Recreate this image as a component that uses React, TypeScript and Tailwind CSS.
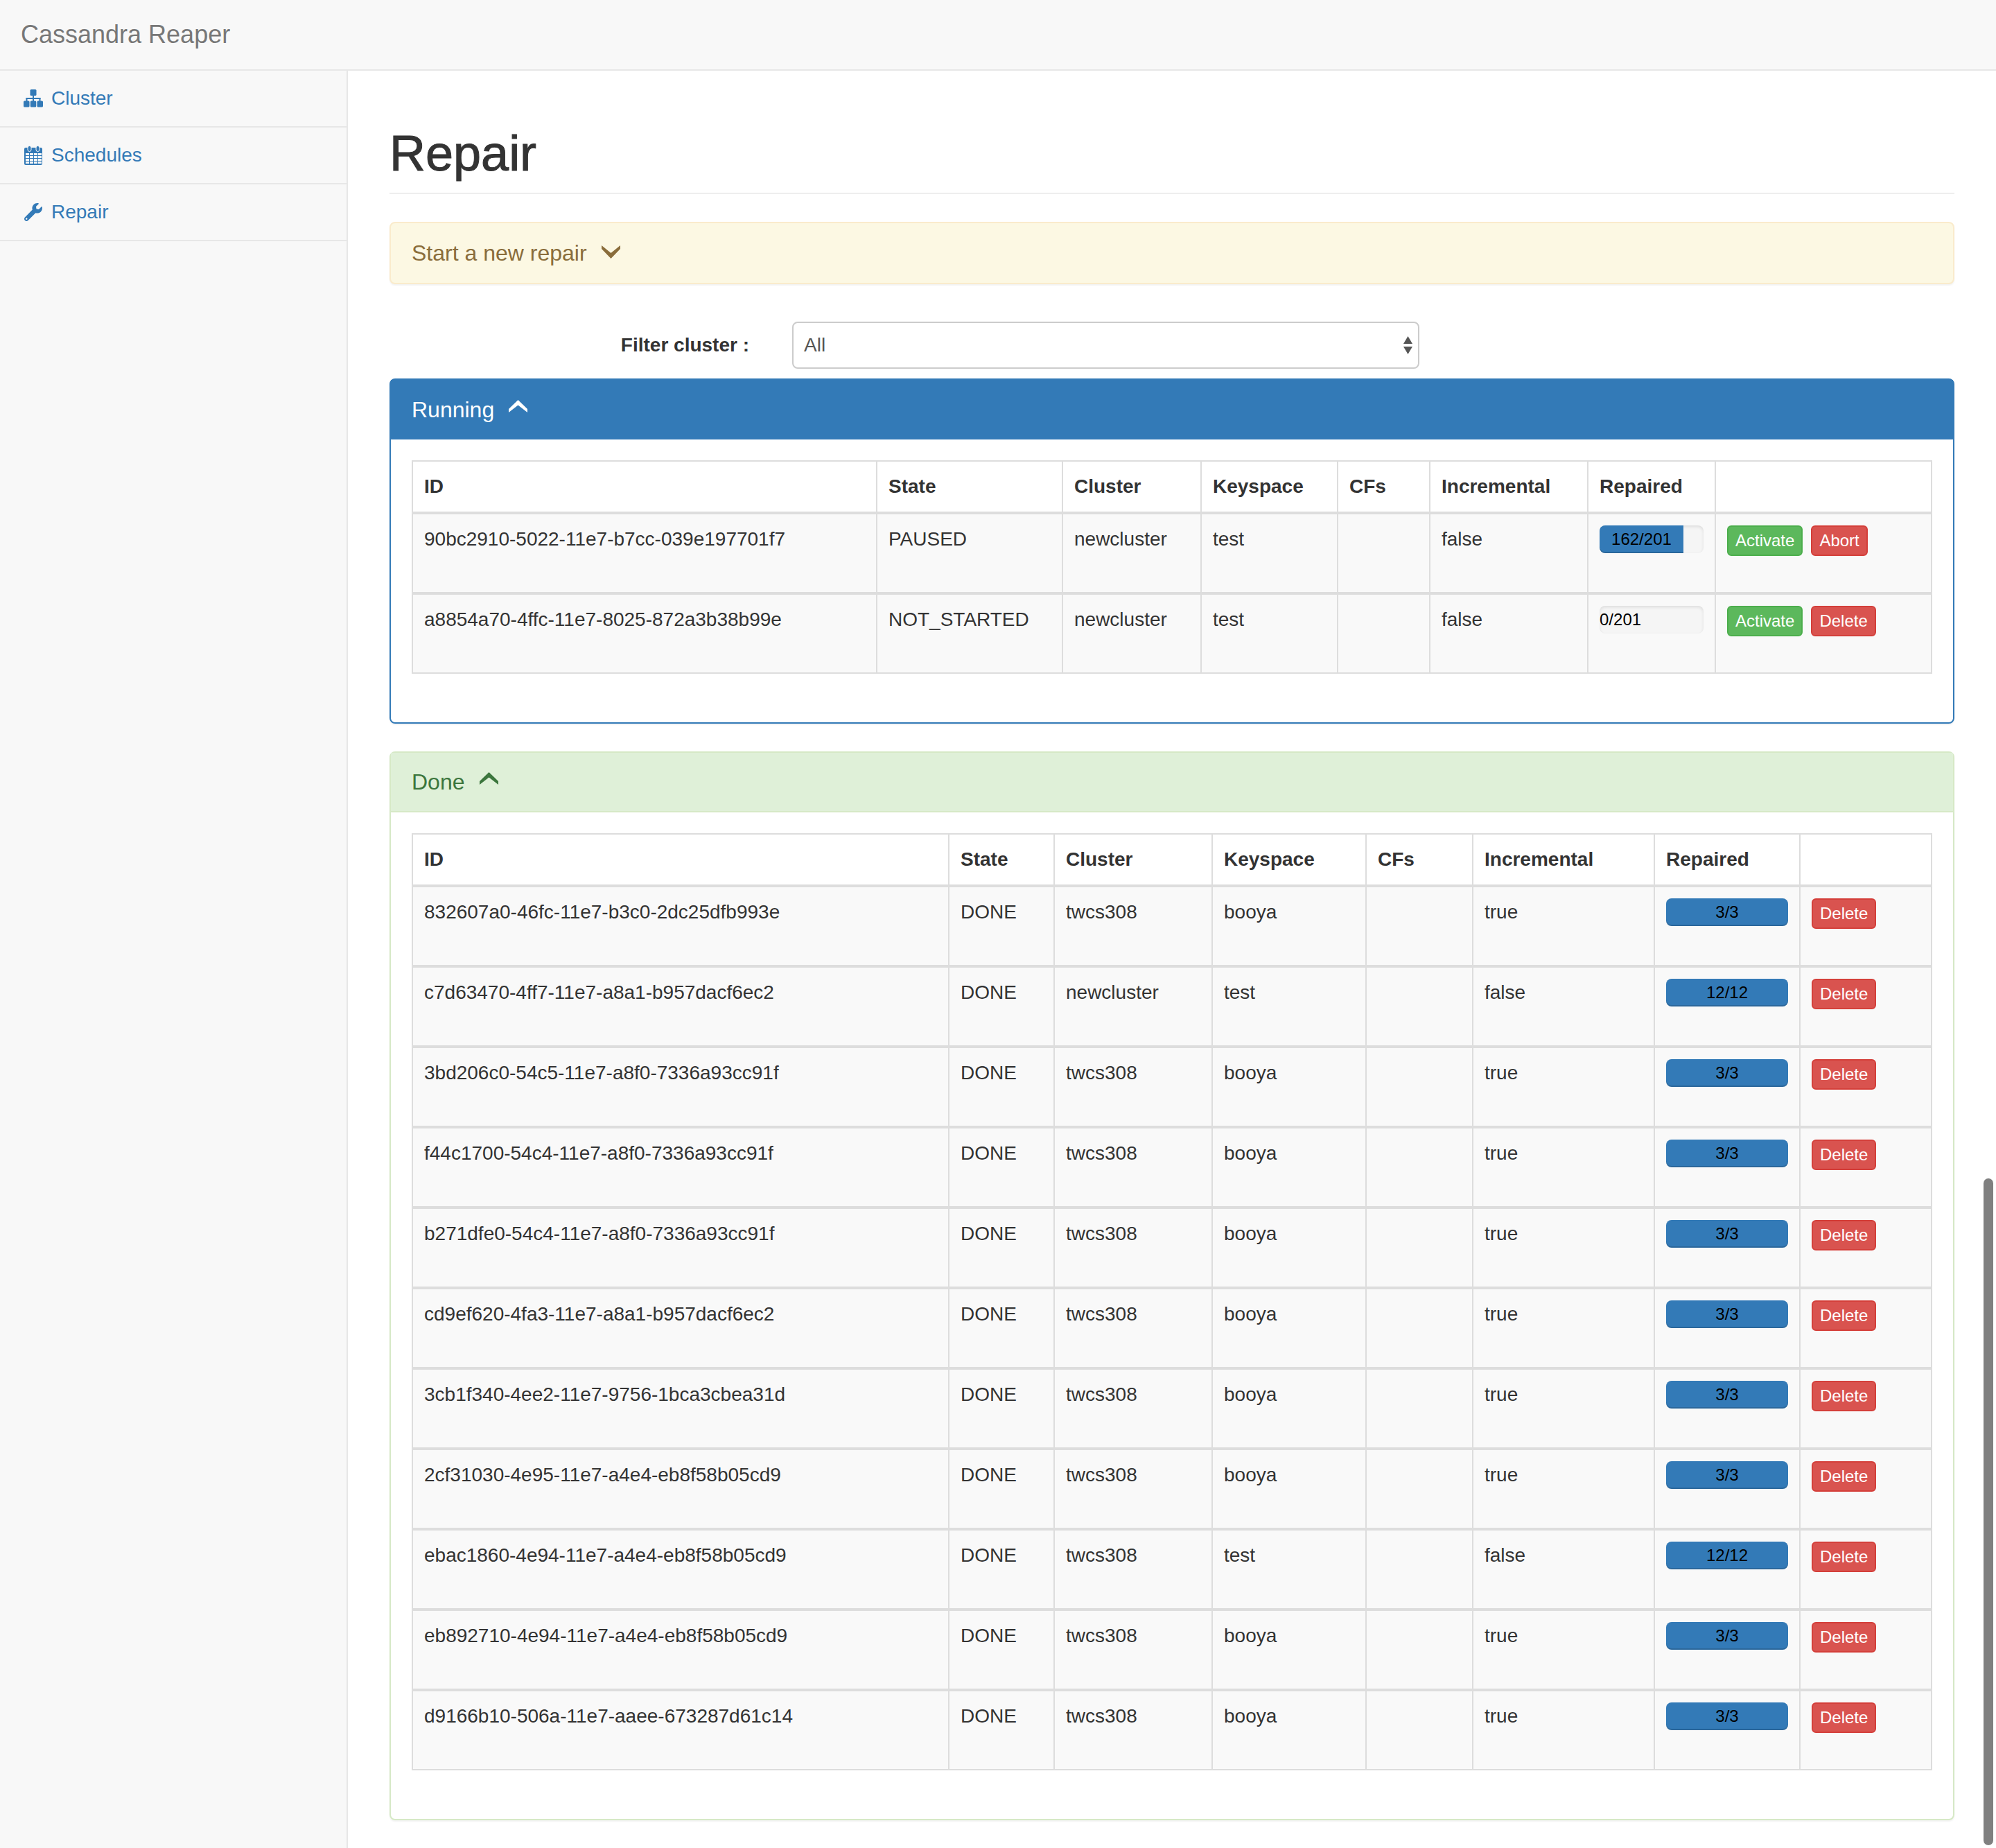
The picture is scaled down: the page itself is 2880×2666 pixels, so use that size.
import { FaWrench } from "react-icons/fa";

type RepairRow = {
  id: string;
  state: string;
  cluster: string;
  keyspace: string;
  incremental: string;
  done: number;
  total: number;
  actions: string[];
};

const running: RepairRow[] = [
  { id: "90bc2910-5022-11e7-b7cc-039e197701f7", state: "PAUSED", cluster: "newcluster", keyspace: "test", incremental: "false", done: 162, total: 201, actions: ["Activate", "Abort"] },
  { id: "a8854a70-4ffc-11e7-8025-872a3b38b99e", state: "NOT_STARTED", cluster: "newcluster", keyspace: "test", incremental: "false", done: 0, total: 201, actions: ["Activate", "Delete"] },
];

const doneRow = (id: string, cluster = "twcs308", keyspace = "booya", incremental = "true", total = 3): RepairRow => ({
  id,
  state: "DONE",
  cluster,
  keyspace,
  incremental,
  done: total,
  total,
  actions: ["Delete"],
});

const done: RepairRow[] = [
  doneRow("832607a0-46fc-11e7-b3c0-2dc25dfb993e"),
  doneRow("c7d63470-4ff7-11e7-a8a1-b957dacf6ec2", "newcluster", "test", "false", 12),
  doneRow("3bd206c0-54c5-11e7-a8f0-7336a93cc91f"),
  doneRow("f44c1700-54c4-11e7-a8f0-7336a93cc91f"),
  doneRow("b271dfe0-54c4-11e7-a8f0-7336a93cc91f"),
  doneRow("cd9ef620-4fa3-11e7-a8a1-b957dacf6ec2"),
  doneRow("3cb1f340-4ee2-11e7-9756-1bca3cbea31d"),
  doneRow("2cf31030-4e95-11e7-a4e4-eb8f58b05cd9"),
  doneRow("ebac1860-4e94-11e7-a4e4-eb8f58b05cd9", "twcs308", "test", "false", 12),
  doneRow("eb892710-4e94-11e7-a4e4-eb8f58b05cd9"),
  doneRow("d9166b10-506a-11e7-aaee-673287d61c14"),
];

const runningCols = ["w-[670px]", "w-[268px]", "w-[200px]", "w-[197px]", "w-[133px]", "w-[228px]", "w-[184px]", "w-[312px]"];
const doneCols = ["w-[774px]", "w-[152px]", "w-[228px]", "w-[222px]", "w-[154px]", "w-[262px]", "w-[210px]", "w-[190px]"];
const headers = ["ID", "State", "Cluster", "Keyspace", "CFs", "Incremental", "Repaired", ""];

function SitemapIcon() {
  return (
    <svg width="28" height="26" viewBox="0 0 28 26" fill="#337ab7">
      <rect x="9.5" y="0" width="9" height="9" rx="1.5" />
      <rect x="0" y="16.5" width="8.5" height="9" rx="1.5" />
      <rect x="9.75" y="16.5" width="8.5" height="9" rx="1.5" />
      <rect x="19.5" y="16.5" width="8.5" height="9" rx="1.5" />
      <rect x="13" y="9" width="2" height="8" />
      <rect x="3.5" y="12" width="21" height="2" />
      <rect x="3.5" y="12" width="2" height="5" />
      <rect x="22.5" y="12" width="2" height="5" />
    </svg>
  );
}

function CalendarIcon() {
  return (
    <svg width="28" height="28" viewBox="0 0 28 28">
      <rect x="1" y="3" width="26" height="25" rx="2" fill="#337ab7" />
      <rect x="6" y="0.5" width="5" height="8" rx="2.5" fill="#337ab7" stroke="#f8f8f8" strokeWidth="1" />
      <rect x="18" y="0.5" width="5" height="8" rx="2.5" fill="#337ab7" stroke="#f8f8f8" strokeWidth="1" />
      <g fill="#f8f8f8">
        {[3, 9, 15, 21].map((x) =>
          [11, 15, 19, 23].map((y) => <rect key={`${x}-${y}`} x={x} y={y} width="5" height="3" />),
        )}
      </g>
    </svg>
  );
}

function ChevronUp() {
  return (
    <svg width="27" height="18" viewBox="0 0 27 18" fill="currentColor" className="ml-[21px] mb-[10px]">
      <polygon points="13.5,0 27,13 27,18 13.5,7.5 0,18 0,13" />
    </svg>
  );
}

function ChevronDown() {
  return (
    <svg width="27" height="19" viewBox="0 0 27 19" fill="currentColor" className="ml-[21px] mb-[3px]">
      <polygon points="13.5,19 27,5 27,0 13.5,11 0,0 0,5" />
    </svg>
  );
}

function Progress({ done, total }: { done: number; total: number }) {
  return (
    <div className="h-10 mb-10 rounded-lg bg-[#f5f5f5] shadow-[inset_0_2px_4px_rgba(0,0,0,0.1)] text-[24px] leading-10 text-black">
      <div
        className="h-10 rounded-l-lg last:rounded-lg bg-[#337ab7] shadow-[inset_0_-2px_0_rgba(0,0,0,0.15)] text-center whitespace-nowrap"
        style={{ width: `${(done / total) * 100}%`, borderRadius: done === total ? 8 : "8px 0 0 8px" }}
      >
        {done}/{total}
      </div>
    </div>
  );
}

function ActionButton({ label }: { label: string }) {
  const green = label === "Activate";
  return (
    <button
      className={
        "h-11 px-[10px] rounded-md border-2 text-white text-[24px] leading-9 " +
        (green ? "bg-[#5cb85c] border-[#4cae4c]" : "bg-[#d9534f] border-[#d43f3a]")
      }
    >
      {label}
    </button>
  );
}

function RepairTable({ rows, cols }: { rows: RepairRow[]; cols: string[] }) {
  return (
    <table className="w-[2194px] table-fixed border-collapse">
      <colgroup>
        {cols.map((c) => (
          <col key={c} className={c} />
        ))}
      </colgroup>
      <thead>
        <tr className="bg-white">
          {headers.map((h, i) => (
            <th key={i} className="border-2 border-b-4 border-[#ddd] p-4 text-left font-bold leading-10">
              {h}
            </th>
          ))}
        </tr>
      </thead>
      <tbody>
        {rows.map((r) => (
          <tr key={r.id} className="bg-[#f9f9f9]">
            {[r.id, r.state, r.cluster, r.keyspace, "", r.incremental].map((v, i) => (
              <td key={i} className="border-2 border-t-4 border-[#ddd] p-4 align-top leading-10 truncate">
                {v}
              </td>
            ))}
            <td className="border-2 border-t-4 border-[#ddd] p-4 align-top">
              <Progress done={r.done} total={r.total} />
            </td>
            <td className="border-2 border-t-4 border-[#ddd] p-4 align-top">
              <div className="flex gap-3">
                {r.actions.map((a) => (
                  <ActionButton key={a} label={a} />
                ))}
              </div>
            </td>
          </tr>
        ))}
      </tbody>
    </table>
  );
}

function SideItem({ icon, label }: { icon: React.ReactNode; label: string }) {
  return (
    <a className="flex h-[82px] items-center border-b-2 border-[#e7e7e7] pl-[34px] text-[#337ab7]">
      <span className="flex w-[28px] justify-center">{icon}</span>
      <span className="ml-3">{label}</span>
    </a>
  );
}

export default function App() {
  return (
    <div className="relative w-[2880px] overflow-hidden bg-white text-[28px] text-[#333] [font-family:'Liberation_Sans',Arial,sans-serif]">
      {/* Navbar */}
      <header className="flex h-[102px] items-center border-b-2 border-[#e7e7e7] bg-[#f8f8f8] pl-[30px] text-[36px] text-[#777]">
        Cassandra Reaper
      </header>

      <div className="flex">
        {/* Sidebar */}
        <nav className="w-[502px] shrink-0 border-r-2 border-[#e7e7e7] bg-[#f8f8f8]">
          <SideItem icon={<SitemapIcon />} label="Cluster" />
          <SideItem icon={<CalendarIcon />} label="Schedules" />
          <SideItem icon={<FaWrench size={26} />} label="Repair" />
        </nav>

        {/* Page */}
        <main className="w-[2378px] px-[60px] pt-20 pb-10">
          <h1 className="mb-10 border-b-2 border-[#eee] pb-[17px] text-[72px] leading-[79px] [-webkit-text-stroke:1px_#333]">
            Repair
          </h1>

          <section className="mb-10 rounded-lg border-2 border-[#faebcc] bg-[#fcf8e3] text-[#8a6d3b] shadow-[0_2px_2px_rgba(0,0,0,0.05)]">
            <div className="flex h-[86px] items-center px-[30px] text-[32px]">
              Start a new repair
              <ChevronDown />
            </div>
          </section>

          <div className="flex items-center py-[14px]">
            <label className="w-[519px] text-right font-bold">Filter cluster :</label>
            <div className="ml-[62px] flex h-[68px] w-[905px] items-center justify-between rounded-lg border-2 border-[#ccc] bg-white pl-[15px] pr-2 text-[#555]">
              All
              <svg width="13" height="26" viewBox="0 0 13 26" fill="#555">
                <polygon points="6.5,0 13,11 0,11" />
                <polygon points="0,15 13,15 6.5,26" />
              </svg>
            </div>
          </div>

          <section className="mb-10 rounded-lg border-2 border-[#337ab7] shadow-[0_2px_2px_rgba(0,0,0,0.05)]">
            <div className="flex h-[86px] items-center bg-[#337ab7] px-[30px] text-[32px] text-white">
              Running
              <ChevronUp />
            </div>
            <div className="p-[30px] pb-[70px]">
              <RepairTable rows={running} cols={runningCols} />
            </div>
          </section>

          <section className="rounded-lg border-2 border-[#d6e9c6] shadow-[0_2px_2px_rgba(0,0,0,0.05)]">
            <div className="flex h-[86px] items-center border-b-2 border-[#d6e9c6] bg-[#dff0d8] px-[30px] text-[32px] text-[#3c763d]">
              Done
              <ChevronUp />
            </div>
            <div className="p-[30px] pb-[70px]">
              <RepairTable rows={done} cols={doneCols} />
            </div>
          </section>
        </main>
      </div>

      {/* Overlay scrollbar */}
      <div className="absolute left-[2862px] top-[1700px] h-[962px] w-[14px] rounded-full bg-[#808080]" />
    </div>
  );
}
